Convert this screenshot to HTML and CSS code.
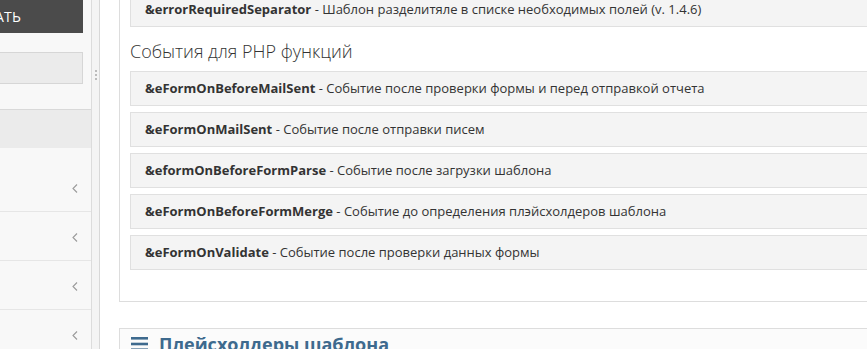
FILE: index.html
```html
<!DOCTYPE html>
<html lang="ru">
<head>
<meta charset="utf-8">
<link rel="stylesheet" href="styles.css">
</head>
<body>
<div class="layout">
  <aside class="sidebar">
    <div class="side-top">
      <button class="btn-dark">ИСКАТЬ</button>
      <div class="search-input"></div>
    </div>
    <div class="side-band"></div>
    <ul class="side-list">
      <li class="side-row first"><svg class="chev" width="6" height="9" viewBox="0 0 6 9"><polyline points="5,0.5 1,4.5 5,8.5" fill="none" stroke="#9a9a9a" stroke-width="1.1"/></svg></li>
      <li class="side-row"><svg class="chev" width="6" height="9" viewBox="0 0 6 9"><polyline points="5,0.5 1,4.5 5,8.5" fill="none" stroke="#9a9a9a" stroke-width="1.1"/></svg></li>
      <li class="side-row"><svg class="chev" width="6" height="9" viewBox="0 0 6 9"><polyline points="5,0.5 1,4.5 5,8.5" fill="none" stroke="#9a9a9a" stroke-width="1.1"/></svg></li>
      <li class="side-row"><svg class="chev" width="6" height="9" viewBox="0 0 6 9"><polyline points="5,0.5 1,4.5 5,8.5" fill="none" stroke="#9a9a9a" stroke-width="1.1"/></svg></li>
    </ul>
  </aside>
  <div class="splitter"><span class="dot"></span><span class="dot"></span><span class="dot"></span></div>
  <main class="main">
    <section class="panel">
      <div class="item"><b>&amp;errorRequiredSeparator</b> - Шаблон разделитяле в списке необходимых полей (v. 1.4.6)</div>
      <h3 class="section-title">События для PHP функций</h3>
      <div class="item"><b>&amp;eFormOnBeforeMailSent</b> - Событие после проверки формы и перед отправкой отчета</div>
      <div class="item"><b>&amp;eFormOnMailSent</b> - Событие после отправки писем</div>
      <div class="item"><b>&amp;eformOnBeforeFormParse</b> - Событие после загрузки шаблона</div>
      <div class="item"><b>&amp;eFormOnBeforeFormMerge</b> - Событие до определения плэйсхолдеров шаблона</div>
      <div class="item"><b>&amp;eFormOnValidate</b> - Событие после проверки данных формы</div>
    </section>
    <section class="panel panel2">
      <h2 class="panel-title"><svg class="bars" width="17" height="14" viewBox="0 0 17 14"><rect x="0" y="0" width="17" height="2.6" fill="#3e6a8e"/><rect x="0" y="5.7" width="17" height="2.6" fill="#3e6a8e"/><rect x="0" y="11.4" width="17" height="2.6" fill="#3e6a8e"/></svg>Плейсхолдеры шаблона</h2>
    </section>
  </main>
</div>
</body>
</html>
```

FILE: styles.css
```css
html, body {
  margin: 0;
  padding: 0;
  background: #ffffff;
  overflow: hidden;
  height: 349px;
}
body {
  font-family: "Open Sans", "DejaVu Sans", sans-serif;
  color: #333333;
}
.layout {
  display: flex;
  align-items: flex-start;
  height: 349px;
}
.sidebar {
  flex: none;
  width: 201px;
  margin-left: -109px;
  height: 360px;
  background: #f8f8f8;
  border-right: 1px solid #dcdcdc;
  box-sizing: border-box;
  display: flex;
  flex-direction: column;
}
.sidebar > * {
  flex: none;
}
.side-top {
  padding: 0 8px 0 0;
  height: 109px;
  box-sizing: border-box;
}
.btn-dark {
  display: block;
  width: 100%;
  height: 33px;
  border: 0;
  margin: 0;
  background: #4b4b4b;
  color: #ffffff;
  font-family: "Open Sans", sans-serif;
  font-size: 14px;
  text-align: right;
  padding: 0 62px 0 0;
  letter-spacing: 0.2px;
}
.search-input {
  margin-top: 19px;
  height: 32px;
  background: #ebebeb;
  border: 1px solid #d6d6d6;
  box-sizing: border-box;
}
.side-band {
  height: 39px;
  border-top: 1px solid #d9d9d9;
  background: #ebebeb;
  box-sizing: border-box;
}
.side-list {
  list-style: none;
  margin: 0;
  padding: 0;
}
.side-row {
  height: 49px;
  border-bottom: 1px solid #e6e6e6;
  display: flex;
  align-items: center;
  justify-content: flex-end;
  padding: 3px 13px 0 0;
  box-sizing: border-box;
  background: #f8f8f8;
}
.side-row.first {
  height: 64px;
  padding-top: 18px;
}
.chev {
  display: block;
}
.splitter {
  flex: none;
  width: 8px;
  height: 349px;
  background: #f4f4f4;
  border-right: 1px solid #d8d8d8;
  display: flex;
  flex-direction: column;
  align-items: center;
  padding-top: 70px;
  gap: 2px;
  box-sizing: border-box;
}
.dot {
  width: 2px;
  height: 2px;
  border-radius: 1px;
  background: #a8a8a8;
}
.main {
  flex: none;
  width: 900px;
  padding-left: 19px;
}
.panel {
  border: 1px solid #dddddd;
  padding: 10px 0 25px 10px;
  margin-top: -19px;
  background: #ffffff;
}
.item {
  background: #f4f4f4;
  border: 1px solid #e0e0e0;
  padding: 8px 14px;
  font-size: 13px;
  line-height: 17px;
  color: #333333;
  margin-bottom: 6px;
  white-space: nowrap;
}
.item b {
  font-weight: 700;
}
.section-title {
  font-size: 18px;
  font-weight: 300;
  line-height: 20px;
  margin: 14px 0 10px 0;
  color: #333333;
}
.panel2 {
  margin-top: 26px;
  padding: 3px 0 0 11px;
  background: #fbfbfb;
}
.panel-title {
  display: flex;
  align-items: center;
  gap: 11px;
  margin: 0;
  font-size: 18px;
  font-weight: 700;
  line-height: 24px;
  color: #3e6a8e;
}
.bars {
  display: block;
}
```
